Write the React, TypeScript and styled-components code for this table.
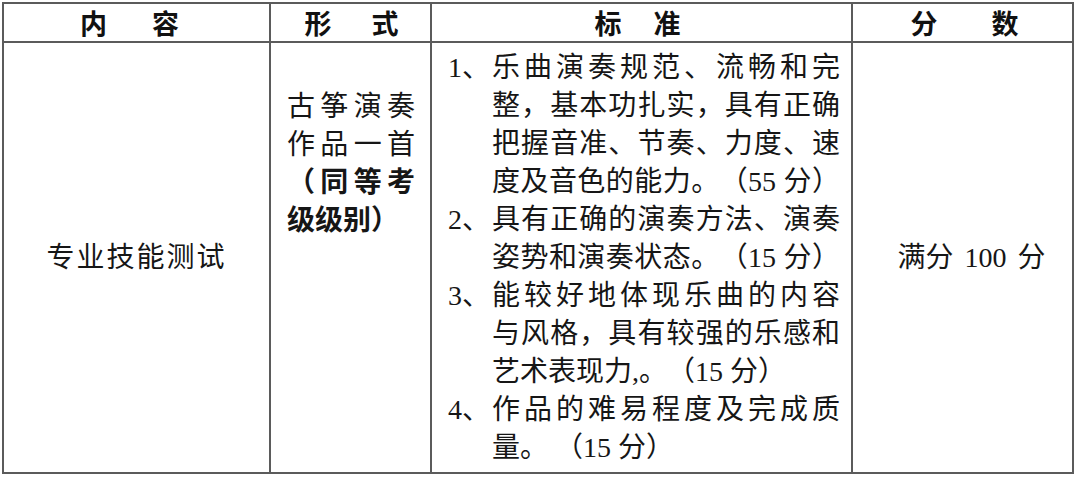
import React from 'react'
import styled, { createGlobalStyle } from 'styled-components'

const LINE = '#5b5b5b'
const CJK = '"Liberation Serif", "Noto Sans CJK SC", serif'

const GlobalStyle = createGlobalStyle`
  html, body {
    margin: 0;
    padding: 0;
    background: #fff;
  }
  body {
    font-family: ${CJK};
    color: #161616;
    text-spacing-trim: space-all;
  }
  * {
    box-sizing: border-box;
  }
`

const Table = styled.div`
  display: grid;
  grid-template-columns: 267px 161px 421px 221px;
  grid-template-rows: 39px 431px;
  width: 1072px;
  margin: 2px 0 0 2px;
  border-left: 2px solid ${LINE};
  border-top: 2px solid ${LINE};
`

const Cell = styled.div`
  border-right: 2px solid ${LINE};
  border-bottom: 2px solid ${LINE};
  font-size: 28px;
  line-height: 38px;
`

const HeadCell = styled(Cell)<{ $gap: number; $shift?: number }>`
  display: flex;
  align-items: center;
  justify-content: center;
  gap: ${p => p.$gap}px;
  padding-left: ${p => (p.$shift && p.$shift > 0 ? p.$shift : 0)}px;
  padding-right: ${p => (p.$shift && p.$shift < 0 ? -p.$shift : 0)}px;
  font-family: "Noto Sans CJK SC", sans-serif;
  font-weight: 700;
  font-size: 27px;
  color: #111;
`

const CenterCell = styled(Cell)`
  display: flex;
  align-items: center;
  justify-content: center;
  letter-spacing: 2px;
`

const FormCell = styled(Cell)`
  padding: 42px 15px 0 16px;
  font-family: "Noto Sans CJK SC", sans-serif;
`

const FormLine = styled.div<{ $fill?: boolean; $bold?: boolean }>`
  text-align: ${p => (p.$fill ? 'justify' : 'left')};
  text-align-last: ${p => (p.$fill ? 'justify' : 'left')};
  font-weight: ${p => (p.$bold ? 700 : 400)};
`

const CriteriaCell = styled(Cell)`
  padding: 6px 11px 0 16px;
`

const Item = styled.div`
  display: flex;
`

const Marker = styled.span`
  flex: none;
  width: 44px;
`

const Lines = styled.div`
  flex: 1;
`

const Line = styled.div<{ $fill?: boolean }>`
  text-align: ${p => (p.$fill ? 'justify' : 'left')};
  text-align-last: ${p => (p.$fill ? 'justify' : 'left')};
`

const ScoreCell = styled(CenterCell)`
  letter-spacing: 0;
  word-spacing: 4px;
  padding-left: 18px;
`

const items: { no: string; lines: { text: string; fill: boolean }[] }[] = [
  {
    no: '1、',
    lines: [
      { text: '乐曲演奏规范、流畅和完', fill: true },
      { text: '整，基本功扎实，具有正确', fill: true },
      { text: '把握音准、节奏、力度、速', fill: true },
      { text: '度及音色的能力。（55 分）', fill: true },
    ],
  },
  {
    no: '2、',
    lines: [
      { text: '具有正确的演奏方法、演奏', fill: true },
      { text: '姿势和演奏状态。（15 分）', fill: true },
    ],
  },
  {
    no: '3、',
    lines: [
      { text: '能较好地体现乐曲的内容', fill: true },
      { text: '与风格，具有较强的乐感和', fill: true },
      { text: '艺术表现力,。（15 分）', fill: false },
    ],
  },
  {
    no: '4、',
    lines: [
      { text: '作品的难易程度及完成质', fill: true },
      { text: '量。 （15 分）', fill: false },
    ],
  },
]

export default function App() {
  return (
    <>
      <GlobalStyle />
      <Table>
        <HeadCell $gap={45} $shift={-14}>
          <span>内</span>
          <span>容</span>
        </HeadCell>
        <HeadCell $gap={40} $shift={2}>
          <span>形</span>
          <span>式</span>
        </HeadCell>
        <HeadCell $gap={32} $shift={-8}>
          <span>标</span>
          <span>准</span>
        </HeadCell>
        <HeadCell $gap={54} $shift={4}>
          <span>分</span>
          <span>数</span>
        </HeadCell>

        <CenterCell>专业技能测试</CenterCell>
        <FormCell>
          <FormLine $fill>古筝演奏</FormLine>
          <FormLine $fill>作品一首</FormLine>
          <FormLine $fill $bold>（同等考</FormLine>
          <FormLine $bold>级级别）</FormLine>
        </FormCell>
        <CriteriaCell>
          {items.map(item => (
            <Item key={item.no}>
              <Marker>{item.no}</Marker>
              <Lines>
                {item.lines.map(l => (
                  <Line key={l.text} $fill={l.fill}>
                    {l.text}
                  </Line>
                ))}
              </Lines>
            </Item>
          ))}
        </CriteriaCell>
        <ScoreCell>满分 100 分</ScoreCell>
      </Table>
    </>
  )
}
